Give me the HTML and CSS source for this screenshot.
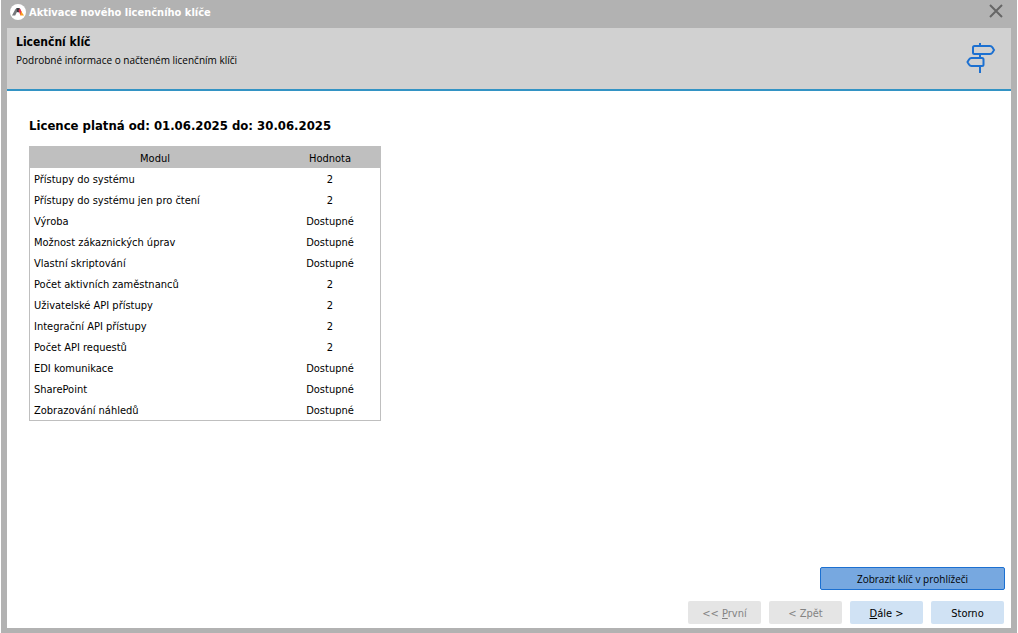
FILE: index.html
```html
<!DOCTYPE html>
<html lang="cs">
<head>
<meta charset="utf-8">
<title>Aktivace nového licenčního klíče</title>
<link rel="stylesheet" href="styles.css">
</head>
<body>
<div class="window">
  <header class="titlebar">
    <svg class="logo" viewBox="0 0 16 16" aria-hidden="true">
      <circle cx="8" cy="8" r="8" fill="#fff"/>
      <path d="M2 11.500 5.200 5.500Q6 4 7.500 4H9L5.200 11.500z" fill="#77797d"/>
      <path d="M6.500 4H9.500L10.500 6 8.500 8.500 7 8z" fill="#3c3a40"/>
      <path d="M8.500 6.500 10 4.500 12 8.500 10.500 11.500z" fill="#e8344e"/>
      <path d="M11 7 14 11.500H10.300z" fill="#fba01c"/>
    </svg>
    <h1 class="caption">Aktivace nového licenčního klíče</h1>
    <button class="close" type="button" aria-label="Zavřít">
      <svg viewBox="0 0 14 14" aria-hidden="true"><path d="M1 1 13 13M13 1 1 13"/></svg>
    </button>
  </header>
  <main class="client">
    <section class="banner">
      <div>
        <h2 class="banner-title">Licenční klíč</h2>
        <p class="banner-text">Podrobné informace o načteném licenčním klíči</p>
      </div>
      <svg class="signpost" viewBox="0 0 30 32" aria-hidden="true">
        <path d="M14 1v3M14 12v4M14 24v7"/>
        <path d="M8.500 4H24q1.500 0 2.500 1.500L28 8l-1.500 2.500Q25.500 12 24 12H8.500q-1.500 0-1.500-1.500v-5Q7 4 8.500 4z"/>
        <path d="M16 16H5.500q-1.500 0-2.500 1.500L1.500 20 3 22.500Q4 24 5.500 24H16q1.500 0 1.500-1.500v-5Q17.500 16 16 16z"/>
      </svg>
    </section>
    <section class="content">
      <h3 class="validity">Licence platná od: 01.06.2025 do: 30.06.2025</h3>
      <table class="modules">
        <thead><tr><th class="name">Modul</th><th class="value">Hodnota</th></tr></thead>
        <tbody>
          <tr><td>Přístupy do systému</td><td>2</td></tr>
          <tr><td>Přístupy do systému jen pro čtení</td><td>2</td></tr>
          <tr><td>Výroba</td><td>Dostupné</td></tr>
          <tr><td>Možnost zákaznických úprav</td><td>Dostupné</td></tr>
          <tr><td>Vlastní skriptování</td><td>Dostupné</td></tr>
          <tr><td>Počet aktivních zaměstnanců</td><td>2</td></tr>
          <tr><td>Uživatelské API přístupy</td><td>2</td></tr>
          <tr><td>Integrační API přístupy</td><td>2</td></tr>
          <tr><td>Počet API requestů</td><td>2</td></tr>
          <tr><td>EDI komunikace</td><td>Dostupné</td></tr>
          <tr><td>SharePoint</td><td>Dostupné</td></tr>
          <tr><td>Zobrazování náhledů</td><td>Dostupné</td></tr>
        </tbody>
      </table>
    </section>
    <footer class="actions">
      <button class="view" type="button">Zobrazit klíč v prohlížeči</button>
      <div class="nav">
        <button class="step" type="button" disabled>&lt;&lt; <u>P</u>rvní</button>
        <button class="step" type="button" disabled>&lt; Zpět</button>
        <button class="step" type="button"><u>D</u>ále &gt;</button>
        <button class="step" type="button">Storno</button>
      </div>
    </footer>
  </main>
</div>
</body>
</html>
```
FILE: styles.css
```css
* { box-sizing: border-box; }
body {
  margin: 0;
  background: #fff;
  color: #000;
  font: 11px/14px "DejaVu Sans Condensed", Tahoma, "DejaVu Sans", sans-serif;
}
button { font: inherit; color: inherit; cursor: pointer; }
h1, h2, h3, p { margin: 0; }
.window {
  display: flex;
  flex-direction: column;
  min-height: 100vh;
  margin: 0 1px;
  padding: 0 6px 5px;
  background: #b2b2b2;
}
.titlebar {
  display: flex;
  align-items: center;
  gap: 3px;
  height: 28px;
  padding: 0 8px 4px 3px;
}
.logo { width: 16px; height: 16px; }
.caption { flex: 1; padding-top: 1px; color: #fff; font-size: 11px; font-weight: bold; }
.close { display: flex; padding: 0 0 2px; border: 0; background: none; }
.close svg { width: 14px; height: 14px; fill: none; stroke: #666; stroke-width: 2; }
.client { display: flex; flex: 1; flex-direction: column; background: #fff; }
.banner {
  display: flex;
  justify-content: space-between;
  height: 63px;
  padding: 6px 15px 0 9px;
  border-bottom: 2px solid #3393c4;
  background: #d1d1d1;
}
.banner-title { font-size: 12px; line-height: 16px; }
.banner-text { padding-top: 3px; font-family: "Open Sans", Tahoma, sans-serif; font-size: 10px; }
.signpost {
  width: 30px;
  height: 32px;
  margin-top: 8px;
  fill: none;
  stroke: #1c70d1;
  stroke-width: 2;
}
.content { flex: 1; padding: 26px 22px; }
.validity { margin-bottom: 12px; font-size: 13px; line-height: 17px; }
.modules {
  width: 352px;
  border: 1px solid #bfbfbf;
  border-collapse: separate;
  border-spacing: 0;
  table-layout: fixed;
}
.modules th, .modules td { height: 21px; padding: 2px 4px 0; text-align: left; }
.modules th { background: #bfbfbf; font-weight: normal; text-align: center; }
.modules td:last-child { text-align: center; }
.name { width: 250px; }
.actions {
  display: flex;
  flex-direction: column;
  align-items: flex-end;
  gap: 11px;
  padding: 0 7px 4px 0;
}
.view {
  width: 185px;
  height: 23px;
  margin-right: -1px;
  padding: 0;
  border: 1px solid #1c70d1;
  border-radius: 2px;
  background: #77a8e0;
  font-family: "Open Sans", Tahoma, sans-serif;
  font-size: 10px;
}
.nav { display: flex; gap: 8px; }
.step {
  width: 73px;
  height: 23px;
  padding: 2px 0 0;
  border: 0;
  border-radius: 2px;
  background: #d0e2f4;
}
.step:disabled { background: #e5e5e5; color: #838383; cursor: default; }
```
